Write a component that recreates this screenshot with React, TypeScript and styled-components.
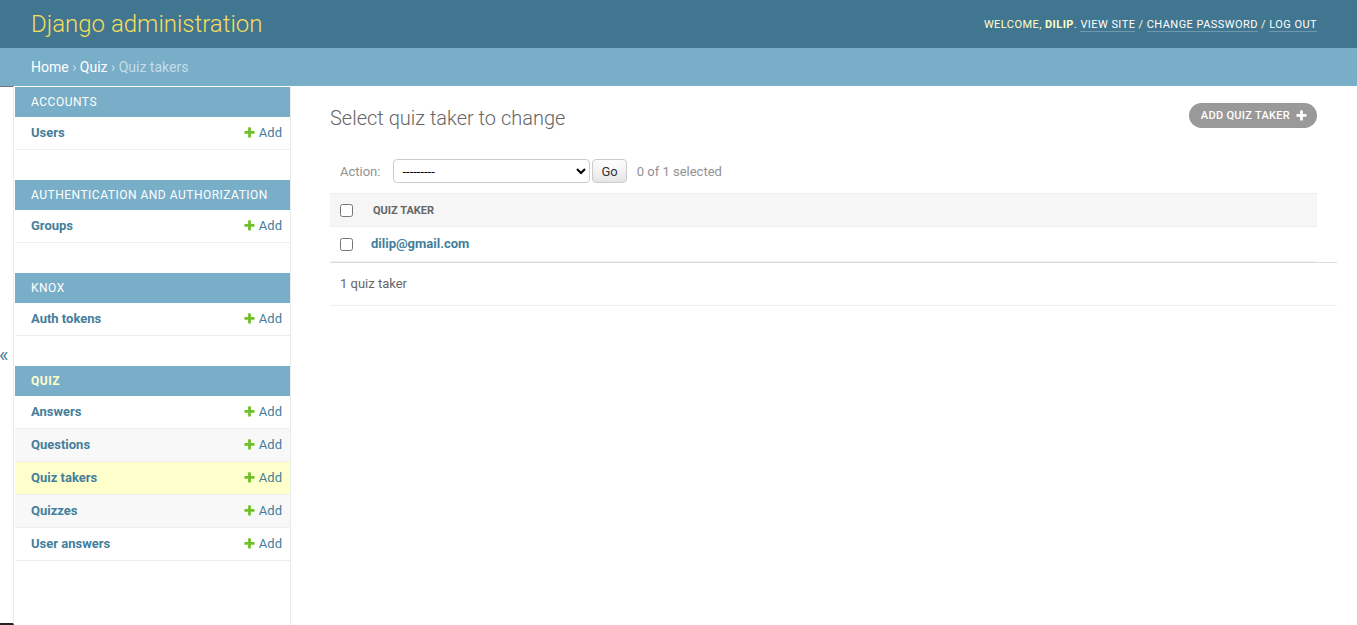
import React from "react";
import styled, { createGlobalStyle, css } from "styled-components";

const GlobalStyle = createGlobalStyle`
  html, body { margin: 0; padding: 0; background: #fff; }
  body {
    font-family: Roboto, "Lucida Grande", "DejaVu Sans", sans-serif;
    font-size: 14px;
    color: #333;
  }
  * { box-sizing: border-box; }
`;

const Page = styled.div`
  min-height: 100vh;
  display: flex;
  flex-direction: column;
`;

const Header = styled.header`
  display: flex;
  justify-content: space-between;
  align-items: center;
  height: 48px;
  padding: 0 40px 0 31px;
  background: #417690;
`;

const Branding = styled.h1`
  margin: 0;
  font-size: 24px;
  font-weight: 300;
  line-height: 28px;
  color: #f5dd5d;
`;

const UserTools = styled.div`
  font-size: 11px;
  letter-spacing: 0.45px;
  text-transform: uppercase;
  color: #ffc;
  line-height: 16px;
  margin-top: 2px;
  strong { font-weight: 700; }
`;

const UserLink = styled.a`
  color: #fff;
  text-decoration: none;
  border-bottom: 1px solid rgba(255, 255, 255, 0.25);
`;

const Breadcrumbs = styled.nav`
  background: #79aec8;
  padding: 10px 40px 10px 31px;
  line-height: 18px;
  font-size: 14px;
  color: #c4dce8;
  a { color: #fff; text-decoration: none; }
`;

const Main = styled.div`
  flex: 1;
  display: flex;
  align-items: stretch;
`;

const Toggle = styled.button`
  flex: 0 0 14px;
  width: 14px;
  display: flex;
  align-items: center;
  justify-content: flex-start;
  padding: 0;
  margin: 0;
  border: 0;
  border-top: 1px solid #767676;
  border-right: 1px solid #eaeaea;
  border-bottom: 2px solid #222;
  background: #fff;
  color: #447e9b;
  font-family: Roboto, sans-serif;
  font-size: 20px;
  line-height: 20px;
  cursor: pointer;
  span { margin-left: -1px; margin-top: 0; }
`;

const Sidebar = styled.nav`
  flex: 0 0 277px;
  width: 277px;
  padding-left: 1px;
  border-top: 1px solid transparent;
  border-right: 1px solid #eaeaea;
`;

const Module = styled.div`
  margin-bottom: 30px;
`;

const Caption = styled.div<{ $current?: boolean }>`
  background: #79aec8;
  color: #fff;
  padding: 8px 8px 8px 16px;
  font-size: 12px;
  line-height: 14px;
  letter-spacing: 0.5px;
  text-transform: uppercase;
  font-weight: 400;
  ${(p) =>
    p.$current &&
    css`
      color: #ffc;
      font-weight: 700;
    `}
`;

const ModelRow = styled.div<{ $bg?: "white" | "alt" | "current" }>`
  display: flex;
  justify-content: space-between;
  align-items: flex-start;
  padding: 8px 8px 8px 16px;
  font-size: 13px;
  line-height: 16px;
  border-bottom: 1px solid #eee;
  background: ${(p) =>
    p.$bg === "current" ? "#ffc" : p.$bg === "alt" ? "#f8f8f8" : "#fff"};
`;

const ModelName = styled.a`
  color: #447e9b;
  font-weight: 700;
  text-decoration: none;
`;

const AddLink = styled.a`
  display: inline-flex;
  align-items: flex-start;
  color: #447e9b;
  text-decoration: none;
  svg { margin-top: 1px; margin-right: 3px; margin-left: -1px; }
`;

const Content = styled.main`
  flex: 1;
  min-width: 0;
  padding: 20px 40px 20px 39px;
`;

const TitleRow = styled.div`
  display: flex;
  justify-content: space-between;
  align-items: flex-start;
`;

const Title = styled.h1`
  margin: 1px 0 19px;
  font-size: 20px;
  line-height: 23px;
  font-weight: 300;
  color: #666;
`;

const ObjectTool = styled.a`
  display: inline-flex;
  align-items: center;
  gap: 5px;
  margin-top: -3px;
  padding: 0 9px 0 12px;
  height: 25px;
  border-radius: 15px;
  background: #999;
  color: #fff;
  font-size: 11px;
  font-weight: 500;
  letter-spacing: 0.3px;
  text-transform: uppercase;
  text-decoration: none;
`;

const Actions = styled.div`
  display: flex;
  align-items: center;
  padding: 10px;
  height: 44px;
  color: #929292;
  font-size: 13px;
`;

const ActionSelect = styled.select`
  width: 197px;
  height: 24px;
  margin: 0 0 0 13px;
  padding: 0 0 0 4px;
  border: 1px solid #ccc;
  border-radius: 4px;
  background: #fff;
  color: #000;
  font-family: Roboto, sans-serif;
  font-size: 13px;
`;

const GoButton = styled.button`
  height: 24px;
  margin-left: 2px;
  padding: 4px 8px;
  border: 1px solid #ccc;
  border-radius: 4px;
  background: #fff;
  box-shadow: 0 -15px 20px -10px rgba(0, 0, 0, 0.15) inset;
  color: #333;
  font-family: Roboto, sans-serif;
  font-size: 13px;
  line-height: 1;
`;

const Counter = styled.span`
  margin-left: 10px;
`;

const Results = styled.table`
  width: 100%;
  border-collapse: collapse;
`;

const HeadCell = styled.th<{ $check?: boolean }>`
  background: #f6f6f6;
  border-top: 1px solid #eee;
  border-bottom: 1px solid #eee;
  height: 33px;
  padding: 0 10px;
  text-align: left;
  font-size: 11px;
  font-weight: 700;
  color: #666;
  text-transform: uppercase;
  vertical-align: middle;
  ${(p) =>
    p.$check &&
    css`
      width: 33px;
      padding: 0;
      text-align: center;
    `}
`;

const Cell = styled.td<{ $check?: boolean }>`
  height: 35px;
  padding: 8px;
  font-size: 13px;
  line-height: 16px;
  border-bottom: 1px solid #eee;
  vertical-align: middle;
  ${(p) =>
    p.$check &&
    css`
      padding: 0;
      text-align: center;
    `}
`;

const Check = styled.input`
  margin: 0;
  width: 13px;
  height: 13px;
  vertical-align: middle;
`;

const ResultLink = styled.a`
  color: #447e9b;
  font-weight: 700;
  text-decoration: none;
`;

const Paginator = styled.p`
  margin: 0 -20px 0 0;
  padding: 10px;
  line-height: 22px;
  font-size: 13px;
  color: #666;
  border-top: 1px solid #ddd;
  border-bottom: 1px solid #eee;
`;

const PlusIcon = ({ color, size }: { color: string; size: number }) => (
  <svg width={size} height={size} viewBox="0 0 1792 1792" aria-hidden="true">
    <path
      fill={color}
      d="M1600 796v192q0 40-28 68t-68 28h-416v416q0 40-28 68t-68 28h-192q-40 0-68-28t-28-68v-416h-416q-40 0-68-28t-28-68v-192q0-40 28-68t68-28h416v-416q0-40 28-68t68-28h192q40 0 68 28t28 68v416h416q40 0 68 28t28 68z"
    />
  </svg>
);

type AppGroup = { name: string; current?: boolean; models: string[] };

const apps: AppGroup[] = [
  { name: "Accounts", models: ["Users"] },
  { name: "Authentication and Authorization", models: ["Groups"] },
  { name: "Knox", models: ["Auth tokens"] },
  {
    name: "Quiz",
    current: true,
    models: ["Answers", "Questions", "Quiz takers", "Quizzes", "User answers"],
  },
];

export default function App() {
  return (
    <Page>
      <GlobalStyle />
      <Header>
        <Branding>Django administration</Branding>
        <UserTools>
          Welcome, <strong>dilip</strong>. <UserLink href="#">View site</UserLink> /{" "}
          <UserLink href="#">Change password</UserLink> /{" "}
          <UserLink href="#">Log out</UserLink>
        </UserTools>
      </Header>
      <Breadcrumbs>
        <a href="#">Home</a> › <a href="#">Quiz</a> › Quiz takers
      </Breadcrumbs>
      <Main>
        <Toggle aria-label="Toggle navigation">
          <span>«</span>
        </Toggle>
        <Sidebar>
          {apps.map((app) => (
            <Module key={app.name}>
              <Caption $current={app.current}>{app.name}</Caption>
              {app.models.map((m, i) => (
                <ModelRow
                  key={m}
                  $bg={
                    m === "Quiz takers" ? "current" : app.models.length > 1 && i % 2 === 1 ? "alt" : "white"
                  }
                >
                  <ModelName href="#">{m}</ModelName>
                  <AddLink href="#">
                    <PlusIcon color="#70bf2b" size={13} />
                    Add
                  </AddLink>
                </ModelRow>
              ))}
            </Module>
          ))}
        </Sidebar>
        <Content>
          <TitleRow>
            <Title>Select quiz taker to change</Title>
            <ObjectTool href="#">
              Add quiz taker
              <PlusIcon color="#fff" size={13} />
            </ObjectTool>
          </TitleRow>
          <Actions>
            <label>Action:</label>
            <ActionSelect defaultValue="">
              <option value="">---------</option>
              <option value="delete">Delete selected quiz takers</option>
            </ActionSelect>
            <GoButton type="button">Go</GoButton>
            <Counter>0 of 1 selected</Counter>
          </Actions>
          <Results>
            <thead>
              <tr>
                <HeadCell $check>
                  <Check type="checkbox" />
                </HeadCell>
                <HeadCell>Quiz taker</HeadCell>
              </tr>
            </thead>
            <tbody>
              <tr>
                <Cell $check>
                  <Check type="checkbox" />
                </Cell>
                <Cell>
                  <ResultLink href="#">dilip@gmail.com</ResultLink>
                </Cell>
              </tr>
            </tbody>
          </Results>
          <Paginator>1 quiz taker</Paginator>
        </Content>
      </Main>
    </Page>
  );
}
